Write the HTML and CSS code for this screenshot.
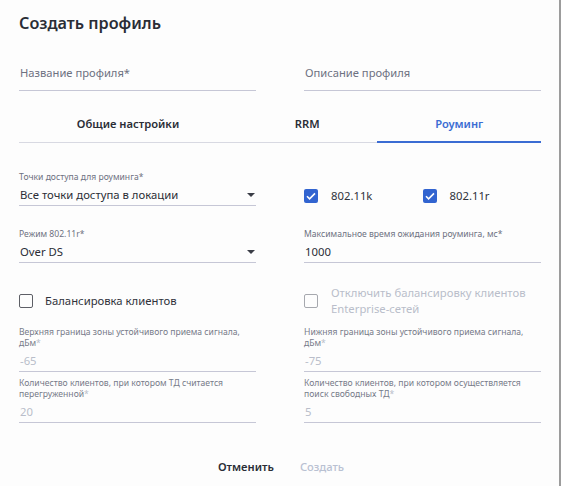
FILE: index.html
```html
<!DOCTYPE html>
<html lang="ru">
<head>
<meta charset="utf-8">
<title>Создать профиль</title>
<link rel="stylesheet" href="styles.css">
</head>
<body>
<div class="dialog">
  <h1 class="title">Создать профиль</h1>

  <div class="row row-name">
    <div class="field field-plain"><span class="ph">Название профиля*</span></div>
    <div class="field field-plain"><span class="ph">Описание профиля</span></div>
  </div>

  <div class="tabs">
    <div class="tab">Общие настройки</div>
    <div class="tab">RRM</div>
    <div class="tab active">Роуминг</div>
  </div>

  <div class="row row-a">
    <div class="field">
      <div class="lbl">Точки доступа для роуминга*</div>
      <div class="val select">Все точки доступа в локации<span class="caret"></span></div>
    </div>
    <div class="checks">
      <label class="check"><span class="box on"><svg viewBox="0 0 14 14" width="14" height="14"><path d="M3 7.2l2.6 2.6L11 4.4" fill="none" stroke="#fff" stroke-width="1.6"/></svg></span>802.11k</label>
      <label class="check"><span class="box on"><svg viewBox="0 0 14 14" width="14" height="14"><path d="M3 7.2l2.6 2.6L11 4.4" fill="none" stroke="#fff" stroke-width="1.6"/></svg></span>802.11r</label>
    </div>
  </div>

  <div class="row row-b">
    <div class="field">
      <div class="lbl">Режим 802.11r*</div>
      <div class="val select">Over DS<span class="caret"></span></div>
    </div>
    <div class="field">
      <div class="lbl">Максимальное время ожидания роуминга, мс*</div>
      <div class="val">1000</div>
    </div>
  </div>

  <div class="row row-c">
    <label class="check"><span class="box"></span>Балансировка клиентов</label>
    <label class="check disabled"><span class="box"></span><span class="two">Отключить балансировку клиентов<br>Enterprise-сетей</span></label>
  </div>

  <div class="row row-d">
    <div class="field dis">
      <div class="lbl">Верхняя граница зоны устойчивого приема сигнала,<br>дБм<span class="ast">*</span></div>
      <div class="val">-65</div>
    </div>
    <div class="field dis">
      <div class="lbl">Нижняя граница зоны устойчивого приема сигнала,<br>дБм<span class="ast">*</span></div>
      <div class="val">-75</div>
    </div>
  </div>

  <div class="row row-e">
    <div class="field dis">
      <div class="lbl">Количество клиентов, при котором ТД считается<br>перегруженной<span class="ast">*</span></div>
      <div class="val">20</div>
    </div>
    <div class="field dis">
      <div class="lbl">Количество клиентов, при котором осуществляется<br>поиск свободных ТД<span class="ast">*</span></div>
      <div class="val">5</div>
    </div>
  </div>

  <div class="footer">
    <button class="btn">Отменить</button>
    <button class="btn btn-off">Создать</button>
  </div>
</div>
</body>
</html>
```

FILE: styles.css
```css
html, body {
  margin: 0;
  padding: 0;
  background: #fdfdfd;
}
body {
  font-family: "Noto Sans", "Open Sans", sans-serif;
  color: #2b2e38;
}
.dialog {
  width: 561px;
  height: 486px;
  box-sizing: border-box;
  padding: 11px 18px 0 19px;
  border-right: 2px solid #9c9c9c;
  background: #fdfdfd;
}
.title {
  margin: 0;
  font-size: 16.2px;
  line-height: 24px;
  font-weight: 600;
  color: #2a2d36;
}
.row {
  display: grid;
  grid-template-columns: 237px 237px;
  column-gap: 48px;
}
.row-name { margin-top: 28px; }
.field {
  display: flex;
  flex-direction: column;
  gap: 2px;
  border-bottom: 1px solid #c6c7d6;
}
.field-plain {
  padding: 0 0 7px 1px;
}
.ph {
  font-size: 11.2px;
  line-height: 20px;
  color: #6d7181;
}
.tabs {
  display: flex;
  margin-top: 15px;
  height: 37px;
  box-sizing: border-box;
  border-bottom: 1px solid #d8d9e2;
}
.tab {
  flex: 1 1 auto;
  height: 35px;
  display: flex;
  align-items: center;
  justify-content: center;
  font-size: 11.2px;
  font-weight: 600;
  color: #2a2d36;
}
.tab.active {
  color: #3b6cd3;
  height: 37px;
  box-sizing: border-box;
  margin-bottom: -1px;
  padding-bottom: 1px;
  border-bottom: 2px solid #3b6cd3;
}
.lbl {
  font-size: 8.6px;
  line-height: 11px;
  color: #6d7181;
}
.val {
  font-size: 11.3px;
  line-height: 20px;
  color: #2a2d36;
  padding-left: 1px;
}
.select {
  position: relative;
}
.caret {
  position: absolute;
  right: 1px;
  top: 8px;
  width: 0;
  height: 0;
  border-left: 4px solid transparent;
  border-right: 4px solid transparent;
  border-top: 4px solid #3a3d46;
}
.row-a { margin-top: 29px; }
.row-b { margin-top: 23px; }
.row-c { margin-top: 22px; height: 32px; align-items: center; }
.row-d { margin-top: 10px; }
.row-e { margin-top: 6px; }
.checks {
  display: grid;
  grid-template-columns: 1fr 1fr;
  align-items: center;
  padding-top: 13px;
}
.check {
  display: flex;
  align-items: center;
  gap: 13px;
  font-size: 11.3px;
  line-height: 16px;
  color: #2f323b;
}
.row-c > .check:first-child { gap: 12px; }
.box {
  width: 14px;
  height: 14px;
  box-sizing: border-box;
  border: 1.5px solid #5d5f66;
  border-radius: 2px;
  flex: none;
  display: flex;
}
.box.on {
  background: #3264d0;
  border: none;
}
.check.disabled { color: #b9bdca; }
.check.disabled .box { border-color: #a6a8ae; }
.two { display: block; }
.dis .lbl { color: #777b89; }
.dis .ast { color: #b9bdca; }
.dis .val { color: #b9bdca; }
.footer {
  display: flex;
  justify-content: center;
  gap: 8px;
  margin-top: 34px;
  padding-left: 2px;
}
.btn {
  font-family: inherit;
  font-size: 11.2px;
  font-weight: 600;
  line-height: 20px;
  color: #2a2d36;
  background: none;
  border: none;
  padding: 0 9px;
}
.btn-off {
  color: #b9c1d2;
  font-weight: 500;
}
```
